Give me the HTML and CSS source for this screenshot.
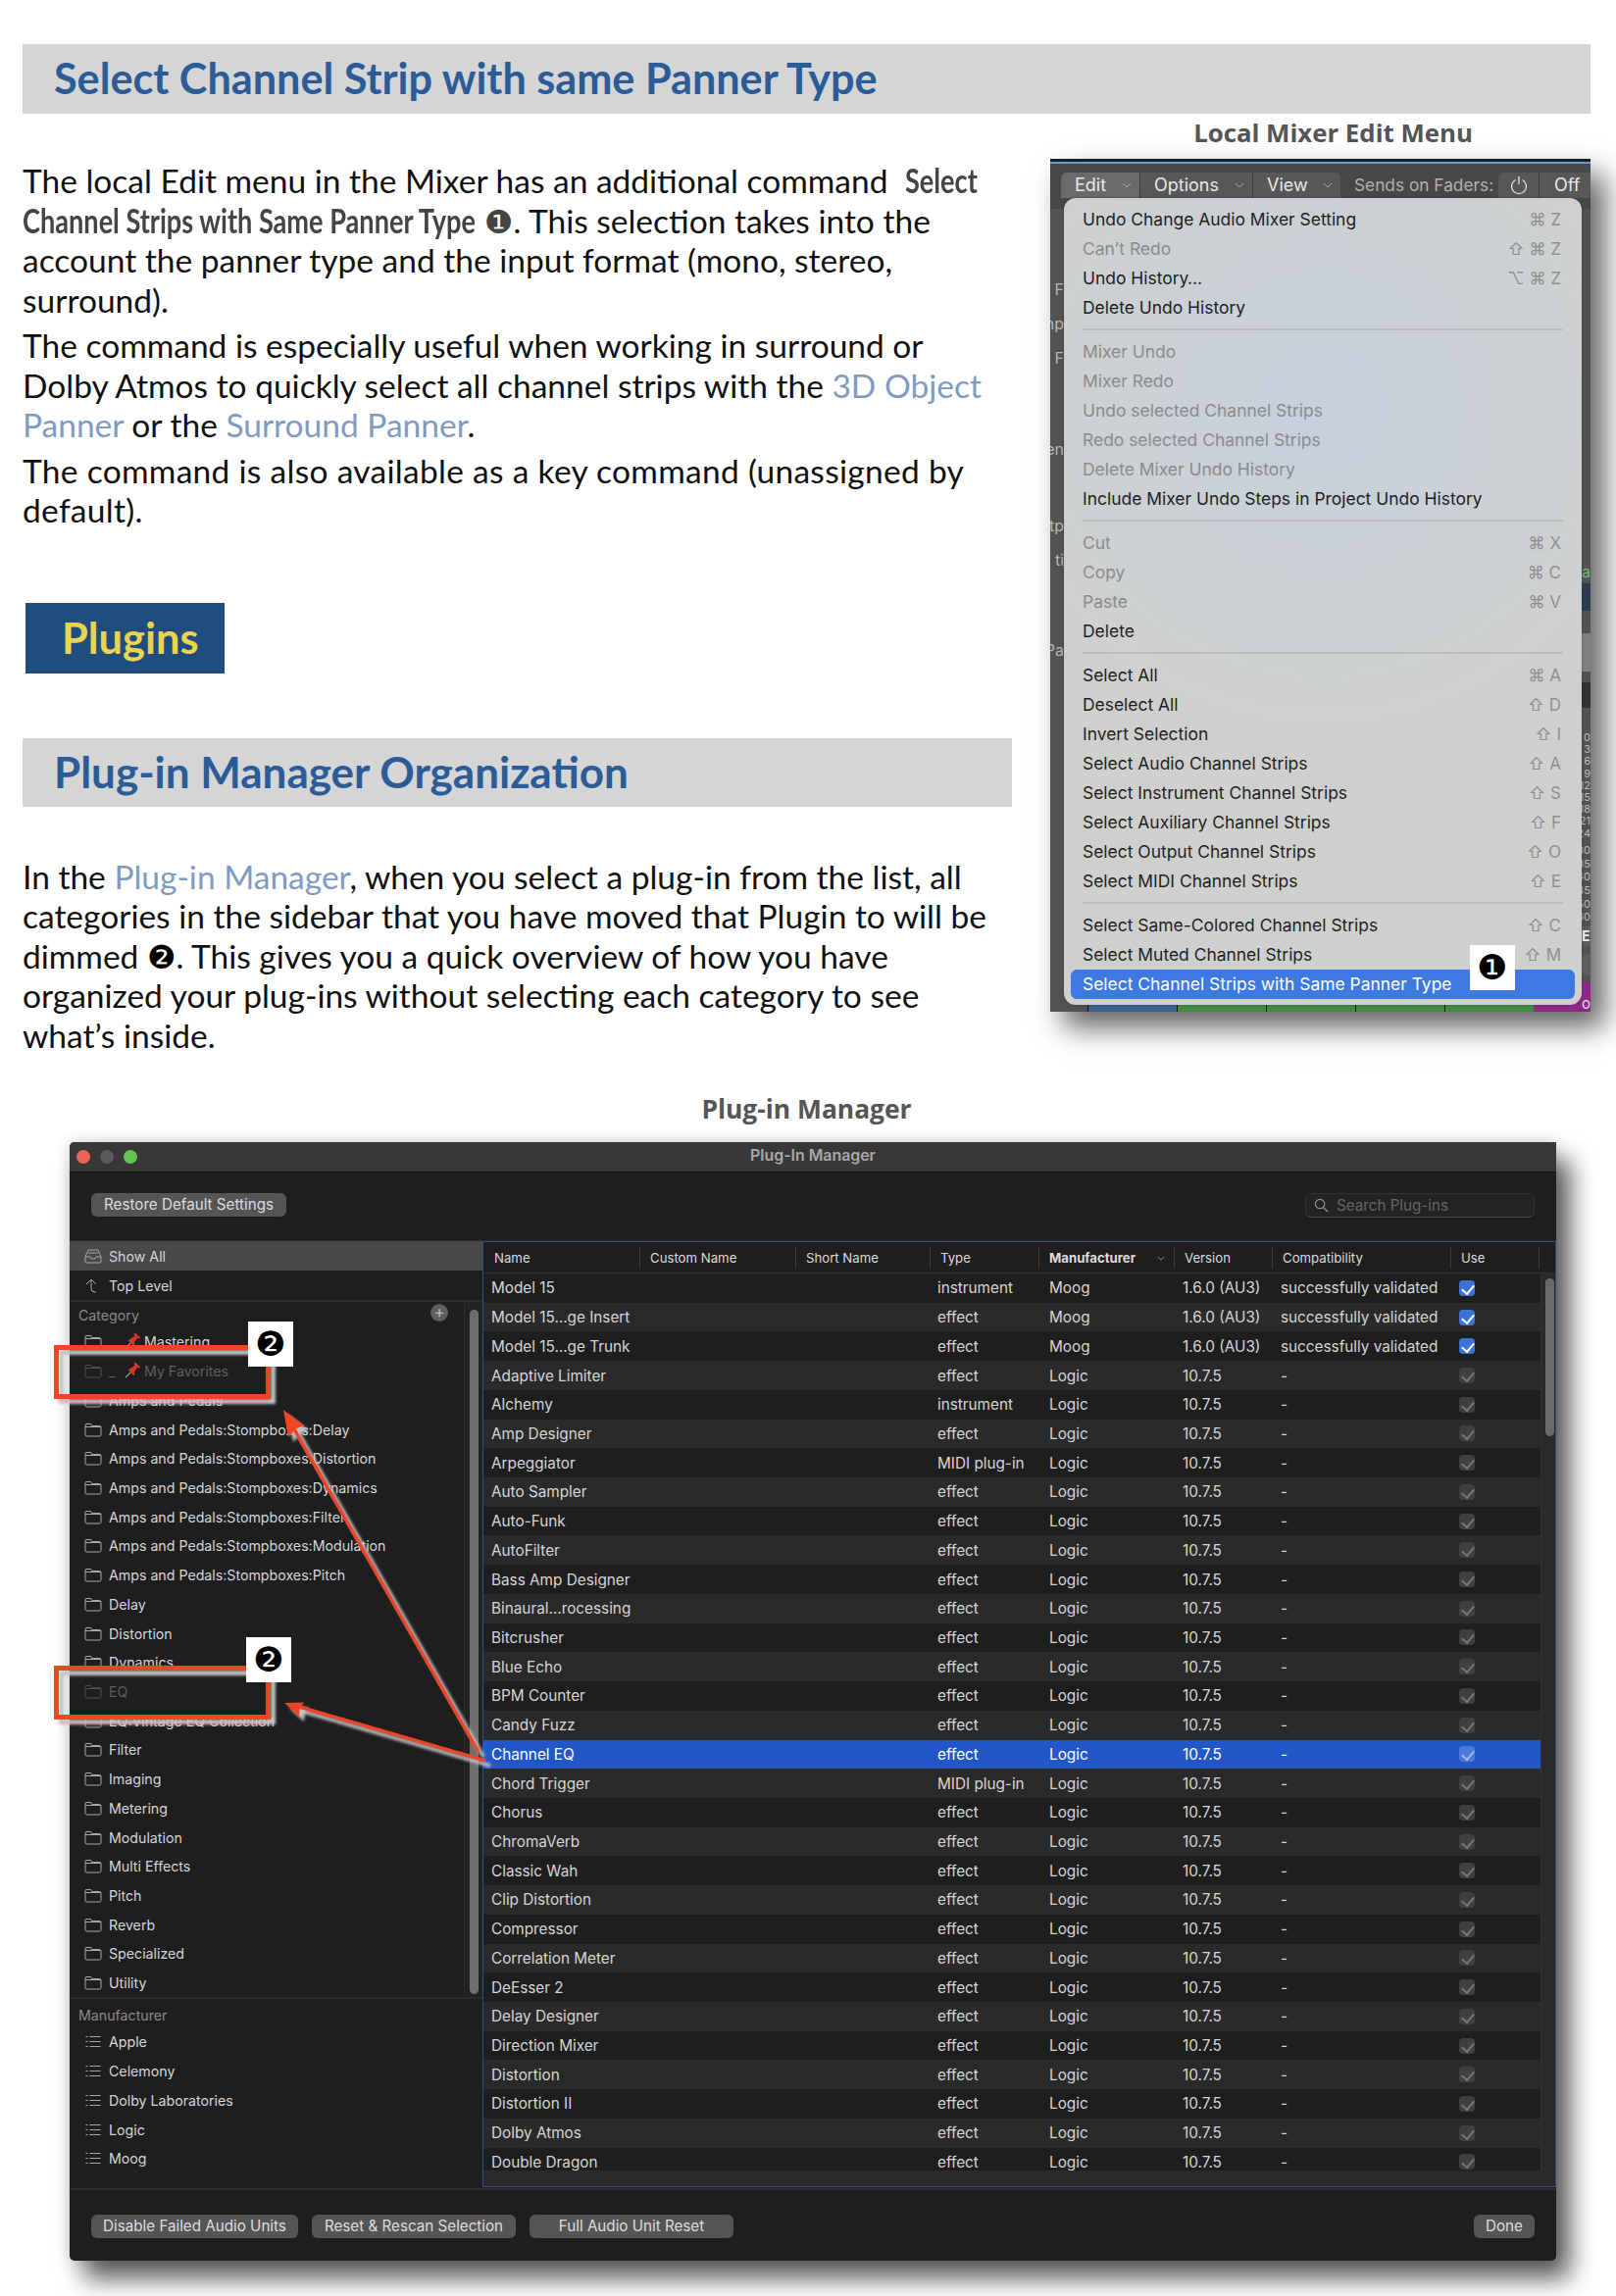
FILE: index.html
```html
<!DOCTYPE html>
<html lang="en">
<head>
<meta charset="utf-8">
<title>Select Channel Strip with same Panner Type</title>
<link rel="stylesheet" href="styles.css">
</head>
<body>
<svg class="defs" width="0" height="0">
  <symbol id="folder" viewBox="0 0 17 15"><path d="M.5 12.500v-10a1 1 0 0 1 1-1h4.600l1 2h7.900a1.500 1.500 0 0 1 1.500 1.500v7.500a1.500 1.500 0 0 1-1.500 1.500H2a1.500 1.500 0 0 1-1.500-1.500zM.5 4.500h16" fill="none" stroke="currentColor"/></symbol>
  <symbol id="list" viewBox="0 0 17 15"><path d="M5 2.500h11M5 7.500h11M5 12.500h11" stroke="currentColor" fill="none"/><path d="M1 2.500h2M1 7.500h2M1 12.500h2" stroke="currentColor" fill="none"/></symbol>
  <symbol id="pin" viewBox="0 0 18 18"><path d="M1 17l6-6" stroke="#aaa" stroke-width="1.200"/><path d="M6 7.500l5-3.500-1-2.500 1.500-1L17.500 6l-1.500 1-2-1-3.500 5 .5 3-1 1-6-6 1-1z" fill="#d9342b"/></symbol>
</svg>
<main class="page">
  <h1 class="band band-wide">Select Channel Strip with same Panner Type</h1>
  <div class="columns">
    <section class="col-left">
      <p class="copy first">The local Edit menu in the Mixer has an additional command&nbsp; <b class="term term-a">Select</b> <b class="term term-b">Channel Strips with Same Panner Type</b> <span class="num num-grey">❶</span>. This selection takes into the account the panner type and the input format (mono, stereo, surround).</p>
      <p class="copy">The command is especially useful when working in surround or Dolby Atmos to quickly select all channel strips with the <a class="lnk">3D Object Panner</a> or the <a class="lnk">Surround Panner</a>.</p>
      <p class="copy copy-3">The command is also available as a key command (unassigned by default).</p>
      <div class="chapter">Plugins</div>
      <h2 class="band band-2">Plug-in Manager Organization</h2>
      <p class="copy first2">In the <a class="lnk">Plug-in Manager</a>, when you select a plug-in from the list, all categories in the sidebar that you have moved that Plugin to will be dimmed <span class="num">❷</span>. This gives you a quick overview of how you have organized your plug-ins without selecting each category to see what’s inside.</p>
    </section>
    <aside class="col-right">
      <div class="caption cap-mixer">Local Mixer Edit Menu</div>
      <div class="mixer">
        <div class="mix-stripe"></div>
        <div class="mix-bar">
          <div class="seg">
            <span class="seg-btn seg-on seg-edit">Edit<svg class="chev" viewBox="0 0 10 6"><path d="M1 1l4 4 4-4" fill="none" stroke="currentColor"/></svg></span>
            <span class="seg-btn seg-opt">Options<svg class="chev" viewBox="0 0 10 6"><path d="M1 1l4 4 4-4" fill="none" stroke="currentColor"/></svg></span>
            <span class="seg-btn seg-view">View<svg class="chev" viewBox="0 0 10 6"><path d="M1 1l4 4 4-4" fill="none" stroke="currentColor"/></svg></span>
          </div>
          <span class="sends">Sends on Faders:</span>
          <span class="pwr"><svg viewBox="0 0 20 20" width="20" height="20"><path d="M6.500 4.500a7.500 7.500 0 1 0 7 0M10 1v8" fill="none" stroke="#e6e6e6" stroke-width="1.300"/></svg></span>
          <span class="off">Off</span>
        </div>
        <div class="mix-bg">
          <span class="sl sl-1">l F</span><span class="sl sl-2">np</span><span class="sl sl-3">o F</span><span class="sl sl-4">en</span><span class="sl sl-5">tp</span><span class="sl sl-6">ti</span><span class="sl sl-7">Pa</span>
          <span class="sr-ac">ac</span><span class="sr-meter"></span><span class="sr-knob"></span><span class="sr-dark"></span>
          <div class="sr-nums"><span>0</span><span>3</span><span>6</span><span>9</span><span>12</span><span>15</span><span>18</span><span>21</span><span>24</span><span class="gap">30</span><span class="wide">35</span><span class="wide">40</span><span class="wide">45</span><span class="wide">50</span><span class="wide">60</span></div>
          <span class="sr-e">E</span><span class="sr-btn"></span>
          <div class="strips"><span class="st st-none"></span><span class="st st-blue"></span><span class="st st-green"></span><span class="st st-green"></span><span class="st st-green"></span><span class="st st-green"></span><span class="st st-pink">o</span></div>
        </div>
        <div class="menu">
          <div class="mi">Undo Change Audio Mixer Setting<kbd>⌘ Z</kbd></div>
          <div class="mi dis">Can’t Redo<kbd>⇧ ⌘ Z</kbd></div>
          <div class="mi">Undo History…<kbd>⌥ ⌘ Z</kbd></div>
          <div class="mi">Delete Undo History</div>
          <hr class="ms">
          <div class="mi dis">Mixer Undo</div>
          <div class="mi dis">Mixer Redo</div>
          <div class="mi dis">Undo selected Channel Strips</div>
          <div class="mi dis">Redo selected Channel Strips</div>
          <div class="mi dis">Delete Mixer Undo History</div>
          <div class="mi">Include Mixer Undo Steps in Project Undo History</div>
          <hr class="ms">
          <div class="mi dis">Cut<kbd>⌘ X</kbd></div>
          <div class="mi dis">Copy<kbd>⌘ C</kbd></div>
          <div class="mi dis">Paste<kbd>⌘ V</kbd></div>
          <div class="mi">Delete</div>
          <hr class="ms">
          <div class="mi">Select All<kbd>⌘ A</kbd></div>
          <div class="mi">Deselect All<kbd>⇧ D</kbd></div>
          <div class="mi">Invert Selection<kbd>⇧ I</kbd></div>
          <div class="mi">Select Audio Channel Strips<kbd>⇧ A</kbd></div>
          <div class="mi">Select Instrument Channel Strips<kbd>⇧ S</kbd></div>
          <div class="mi">Select Auxiliary Channel Strips<kbd>⇧ F</kbd></div>
          <div class="mi">Select Output Channel Strips<kbd>⇧ O</kbd></div>
          <div class="mi">Select MIDI Channel Strips<kbd>⇧ E</kbd></div>
          <hr class="ms">
          <div class="mi">Select Same-Colored Channel Strips<kbd>⇧ C</kbd></div>
          <div class="mi">Select Muted Channel Strips<kbd>⇧ M</kbd></div>
          <div class="mi sel">Select Channel Strips with Same Panner Type</div>
        </div>
        <div class="badge badge-1">❶</div>
      </div>
    </aside>
  </div>
  <div class="caption cap-pm">Plug-in Manager</div>
  <div class="stage">
    <div class="win">
      <div class="titlebar">
        <span class="light red"></span><span class="light grey"></span><span class="light green"></span>
        <span class="wintitle">Plug-In Manager</span>
      </div>
      <div class="tools">
        <span class="btn btn-restore">Restore Default Settings</span>
        <span class="search"><svg viewBox="0 0 16 16" width="15" height="15"><circle cx="6.500" cy="6.500" r="5" fill="none" stroke="#999" stroke-width="1.200"/><path d="M10 10l5 5" stroke="#999" stroke-width="1.400"/></svg>Search Plug-ins</span>
      </div>
      <div class="body">
        <nav class="side">
          <div class="top-row on"><svg class="ic" viewBox="0 0 18 15"><path d="M1 8l3-7h10l3 7v5a1 1 0 0 1-1 1H2a1 1 0 0 1-1-1zM1 8h5l1 2h4l1-2h5M4 4h10" fill="none" stroke="currentColor"/></svg>Show All</div>
          <div class="top-row"><svg class="ic" viewBox="0 0 18 15"><path d="M2 6l5-5 5 5M7 1v9q0 4 4 4h1" fill="none" stroke="currentColor"/></svg>Top Level</div>
          <div class="cat">
            <div class="cat-list">
              <div class="head">Category<span class="plus">+</span></div>
              <div class="r"><svg class="ic"><use href="#folder"/></svg><svg class="pin"><use href="#pin"/></svg>Mastering</div>
              <div class="r dim"><svg class="ic"><use href="#folder"/></svg><span class="us">_</span><svg class="pin"><use href="#pin"/></svg>My Favorites</div>
              <div class="r"><svg class="ic"><use href="#folder"/></svg>Amps and Pedals</div>
              <div class="r"><svg class="ic"><use href="#folder"/></svg>Amps and Pedals:Stompboxes:Delay</div>
              <div class="r"><svg class="ic"><use href="#folder"/></svg>Amps and Pedals:Stompboxes:Distortion</div>
              <div class="r"><svg class="ic"><use href="#folder"/></svg>Amps and Pedals:Stompboxes:Dynamics</div>
              <div class="r"><svg class="ic"><use href="#folder"/></svg>Amps and Pedals:Stompboxes:Filter</div>
              <div class="r"><svg class="ic"><use href="#folder"/></svg>Amps and Pedals:Stompboxes:Modulation</div>
              <div class="r"><svg class="ic"><use href="#folder"/></svg>Amps and Pedals:Stompboxes:Pitch</div>
              <div class="r"><svg class="ic"><use href="#folder"/></svg>Delay</div>
              <div class="r"><svg class="ic"><use href="#folder"/></svg>Distortion</div>
              <div class="r"><svg class="ic"><use href="#folder"/></svg>Dynamics</div>
              <div class="r dim"><svg class="ic"><use href="#folder"/></svg>EQ</div>
              <div class="r"><svg class="ic"><use href="#folder"/></svg>EQ:Vintage EQ Collection</div>
              <div class="r"><svg class="ic"><use href="#folder"/></svg>Filter</div>
              <div class="r"><svg class="ic"><use href="#folder"/></svg>Imaging</div>
              <div class="r"><svg class="ic"><use href="#folder"/></svg>Metering</div>
              <div class="r"><svg class="ic"><use href="#folder"/></svg>Modulation</div>
              <div class="r"><svg class="ic"><use href="#folder"/></svg>Multi Effects</div>
              <div class="r"><svg class="ic"><use href="#folder"/></svg>Pitch</div>
              <div class="r"><svg class="ic"><use href="#folder"/></svg>Reverb</div>
              <div class="r"><svg class="ic"><use href="#folder"/></svg>Specialized</div>
              <div class="r"><svg class="ic"><use href="#folder"/></svg>Utility</div>
            </div>
            <div class="side-track"><span class="side-thumb"></span></div>
          </div>
          <div class="head head-m">Manufacturer</div>
          <div class="r"><svg class="ic"><use href="#list"/></svg>Apple</div>
          <div class="r"><svg class="ic"><use href="#list"/></svg>Celemony</div>
          <div class="r"><svg class="ic"><use href="#list"/></svg>Dolby Laboratories</div>
          <div class="r"><svg class="ic"><use href="#list"/></svg>Logic</div>
          <div class="r"><svg class="ic"><use href="#list"/></svg>Moog</div>
        </nav>
        <section class="table">
          <div class="thead">
            <span class="th th-name">Name</span><span class="th th-custom">Custom Name</span><span class="th th-short">Short Name</span><span class="th th-type">Type</span><span class="th th-mfr"><b>Manufacturer</b><svg class="chev chev-s" viewBox="0 0 10 6"><path d="M1 1l4 4 4-4" fill="none" stroke="currentColor"/></svg></span><span class="th th-ver">Version</span><span class="th th-comp">Compatibility</span><span class="th th-use">Use</span>
          </div>
          <div class="tmain">
            <div class="tbody">
              <div class="row"><span>Model 15</span><span>instrument</span><span>Moog</span><span>1.6.0 (AU3)</span><span>successfully validated</span><i class="cb on"></i></div>
              <div class="row"><span>Model 15…ge Insert</span><span>effect</span><span>Moog</span><span>1.6.0 (AU3)</span><span>successfully validated</span><i class="cb on"></i></div>
              <div class="row"><span>Model 15…ge Trunk</span><span>effect</span><span>Moog</span><span>1.6.0 (AU3)</span><span>successfully validated</span><i class="cb on"></i></div>
              <div class="row"><span>Adaptive Limiter</span><span>effect</span><span>Logic</span><span>10.7.5</span><span>-</span><i class="cb"></i></div>
              <div class="row"><span>Alchemy</span><span>instrument</span><span>Logic</span><span>10.7.5</span><span>-</span><i class="cb"></i></div>
              <div class="row"><span>Amp Designer</span><span>effect</span><span>Logic</span><span>10.7.5</span><span>-</span><i class="cb"></i></div>
              <div class="row"><span>Arpeggiator</span><span>MIDI plug-in</span><span>Logic</span><span>10.7.5</span><span>-</span><i class="cb"></i></div>
              <div class="row"><span>Auto Sampler</span><span>effect</span><span>Logic</span><span>10.7.5</span><span>-</span><i class="cb"></i></div>
              <div class="row"><span>Auto-Funk</span><span>effect</span><span>Logic</span><span>10.7.5</span><span>-</span><i class="cb"></i></div>
              <div class="row"><span>AutoFilter</span><span>effect</span><span>Logic</span><span>10.7.5</span><span>-</span><i class="cb"></i></div>
              <div class="row"><span>Bass Amp Designer</span><span>effect</span><span>Logic</span><span>10.7.5</span><span>-</span><i class="cb"></i></div>
              <div class="row"><span>Binaural…rocessing</span><span>effect</span><span>Logic</span><span>10.7.5</span><span>-</span><i class="cb"></i></div>
              <div class="row"><span>Bitcrusher</span><span>effect</span><span>Logic</span><span>10.7.5</span><span>-</span><i class="cb"></i></div>
              <div class="row"><span>Blue Echo</span><span>effect</span><span>Logic</span><span>10.7.5</span><span>-</span><i class="cb"></i></div>
              <div class="row"><span>BPM Counter</span><span>effect</span><span>Logic</span><span>10.7.5</span><span>-</span><i class="cb"></i></div>
              <div class="row"><span>Candy Fuzz</span><span>effect</span><span>Logic</span><span>10.7.5</span><span>-</span><i class="cb"></i></div>
              <div class="row sel-row"><span>Channel EQ</span><span>effect</span><span>Logic</span><span>10.7.5</span><span>-</span><i class="cb"></i></div>
              <div class="row"><span>Chord Trigger</span><span>MIDI plug-in</span><span>Logic</span><span>10.7.5</span><span>-</span><i class="cb"></i></div>
              <div class="row"><span>Chorus</span><span>effect</span><span>Logic</span><span>10.7.5</span><span>-</span><i class="cb"></i></div>
              <div class="row"><span>ChromaVerb</span><span>effect</span><span>Logic</span><span>10.7.5</span><span>-</span><i class="cb"></i></div>
              <div class="row"><span>Classic Wah</span><span>effect</span><span>Logic</span><span>10.7.5</span><span>-</span><i class="cb"></i></div>
              <div class="row"><span>Clip Distortion</span><span>effect</span><span>Logic</span><span>10.7.5</span><span>-</span><i class="cb"></i></div>
              <div class="row"><span>Compressor</span><span>effect</span><span>Logic</span><span>10.7.5</span><span>-</span><i class="cb"></i></div>
              <div class="row"><span>Correlation Meter</span><span>effect</span><span>Logic</span><span>10.7.5</span><span>-</span><i class="cb"></i></div>
              <div class="row"><span>DeEsser 2</span><span>effect</span><span>Logic</span><span>10.7.5</span><span>-</span><i class="cb"></i></div>
              <div class="row"><span>Delay Designer</span><span>effect</span><span>Logic</span><span>10.7.5</span><span>-</span><i class="cb"></i></div>
              <div class="row"><span>Direction Mixer</span><span>effect</span><span>Logic</span><span>10.7.5</span><span>-</span><i class="cb"></i></div>
              <div class="row"><span>Distortion</span><span>effect</span><span>Logic</span><span>10.7.5</span><span>-</span><i class="cb"></i></div>
              <div class="row"><span>Distortion II</span><span>effect</span><span>Logic</span><span>10.7.5</span><span>-</span><i class="cb"></i></div>
              <div class="row"><span>Dolby Atmos</span><span>effect</span><span>Logic</span><span>10.7.5</span><span>-</span><i class="cb"></i></div>
              <div class="row"><span>Double Dragon</span><span>effect</span><span>Logic</span><span>10.7.5</span><span>-</span><i class="cb"></i></div>
            </div>
            <div class="t-gutter"><span class="t-thumb"></span></div>
          </div>
        </section>
      </div>
      <div class="foot">
        <span class="btn btn-a">Disable Failed Audio Units</span>
        <span class="btn btn-b">Reset &amp; Rescan Selection</span>
        <span class="btn btn-b">Full Audio Unit Reset</span>
        <span class="btn btn-done">Done</span>
      </div>
    </div>
    <svg class="annot" viewBox="0 0 1516 1141" width="1516" height="1141">
      <defs>
        <filter id="halo" x="-20%" y="-20%" width="150%" height="150%"><feDropShadow dx="5" dy="5" stdDeviation="1.800" flood-color="#c4c4c4" flood-opacity="1"/></filter>
      </defs>
      <g filter="url(#halo)">
        <rect x="-13.500" y="209.500" width="216" height="50" fill="none" stroke="#ee4527" stroke-width="5"/>
      </g>
      <g filter="url(#halo)">
        <rect x="-13.500" y="536.500" width="216" height="50" fill="none" stroke="#ee4527" stroke-width="5"/>
      </g>
      <g filter="url(#halo)" fill="#ee4527" stroke="none">
        <path d="M417 622L228 291" stroke="#ee4527" stroke-width="3.600"/>
        <path d="M218 273l21 16-9 4-7 8z"/>
      </g>
      <g filter="url(#halo)" fill="#ee4527" stroke="none">
        <path d="M424 631L234 576" stroke="#ee4527" stroke-width="3.600"/>
        <path d="M219 572l20-.5-4 6-1 8.500z"/>
      </g>
    </svg>
    <div class="badge badge-2a">❷</div>
    <div class="badge badge-2b">❷</div>
  </div>
</main>
</body>
</html>
```
FILE: styles.css
```css
* { box-sizing: border-box; }
html, body { margin: 0; padding: 0; background: #fff; }
body { font-family: Lato, "Noto Sans", sans-serif; }
.defs { position: absolute; }
.page { width: 1648px; height: 2342px; padding: 45px 26px 0 23px; overflow: hidden; }

.band { margin: 0; background: #d5d5d5; color: #2b5c97; font-family: Lato, sans-serif; font-weight: 700; font-size: 43.200px; height: 71px; line-height: 68px; padding-left: 32px; }
.columns { display: grid; grid-template-columns: 1009px 551px; column-gap: 39px; }

.col-left { padding-top: 48px; }
.copy { margin: 0 0 6px; font-size: 33.500px; line-height: 40.500px; color: #111; width: 1005px; }
.copy-3 { letter-spacing: .3px; }
.first2 { margin-top: 51px; }
.term { display: inline-block; font-weight: 700; color: #444; white-space: nowrap; transform: scaleX(.81); transform-origin: 0 50%; }
.term-a { margin-right: -17px; }
.term-b { margin-right: -108px; }
.num { font-family: "DejaVu Sans", sans-serif; font-size: 33px; line-height: 0; color: #000; }
.num-grey { color: #444; }
.lnk { color: #7f9bc1; }
.chapter { width: 203px; height: 72px; margin: 74px 0 0 3px; background: #1e4d7e; color: #e8d44f; font-size: 43.400px; font-weight: 700; line-height: 70px; padding-left: 37px; }
.band-2 { height: 70px; margin-top: 66px; font-size: 44px; }

.caption { font-family: "Open Sans", sans-serif; font-weight: 700; font-size: 26.400px; color: #555; line-height: 38px; text-align: center; height: 38px; }
.cap-mixer { padding-left: 26px; margin-bottom: 8px; font-size: 25.800px; }
.cap-pm { margin-top: 30px; width: 1599px; }

.mixer { position: relative; height: 870px; background: #525252; font-family: Inter, "DejaVu Sans", sans-serif; box-shadow: 14px 16px 28px rgba(0,0,0,.62); overflow: visible; }
.mix-stripe { height: 5px; background: #16202c; border-bottom: 2px solid #6f9bcb; }
.mix-bar { display: flex; align-items: flex-start; height: 46px; background: #474747; padding: 9px 0 0 11px; font-size: 18px; color: #e8e8e8; overflow: hidden; }
.seg { display: flex; height: 26px; border-radius: 6px 6px 0 0; overflow: hidden; }
.seg-btn { display: flex; align-items: center; justify-content: space-between; background: #585858; border-right: 1px solid #3c3c3c; padding: 0 8px 0 14px; line-height: 26px; }
.seg-on { background: #6a6a6a; }
.seg-edit { width: 81px; }
.seg-opt { width: 115px; }
.seg-view { width: 89px; border-right: 0; }
.chev { width: 10px; height: 6px; color: #aaa; }
.sends { margin-left: 14px; width: 147px; font-size: 17.300px; line-height: 26px; color: #b2b2b2; white-space: nowrap; }
.pwr { width: 42px; height: 26px; background: #585858; border-right: 1px solid #3c3c3c; border-radius: 6px 0 0 0; display: flex; align-items: center; justify-content: center; }
.off { width: 52px; height: 26px; padding-left: 15px; line-height: 26px; background: #585858; }

.mix-bg { position: absolute; inset: 0; overflow: hidden; pointer-events: none; }
.sl { position: absolute; left: 0; font-size: 16px; color: #b8b8b8; width: 14px; overflow: hidden; white-space: nowrap; line-height: 18px; direction: rtl; }
.sl-1 { top: 124px; }
.sl-2 { top: 159px; }
.sl-3 { top: 194px; }
.sl-4 { top: 287px; }
.sl-5 { top: 365px; }
.sl-6 { top: 400px; }
.sl-7 { top: 492px; }
.sr-ac { position: absolute; left: 542px; top: 412px; width: 9px; overflow: hidden; color: #6ec06a; font-size: 16px; line-height: 18px; }
.sr-meter { position: absolute; right: 0; top: 433px; width: 9px; height: 28px; background: #2a3b52; }
.sr-knob { position: absolute; right: 0; top: 484px; width: 9px; height: 39px; background: #808080; }
.sr-dark { position: absolute; right: 0; top: 534px; width: 9px; height: 26px; background: #333; }
.sr-nums { position: absolute; right: 0; top: 584px; width: 9px; display: flex; flex-direction: column; font-size: 11px; line-height: 12.200px; color: #bbb; overflow: hidden; white-space: nowrap; direction: rtl; }
.sr-nums .gap { margin-top: 5px; height: 13.700px; }
.sr-nums .wide { height: 13.700px; }
.sr-e { position: absolute; right: 0; top: 783px; width: 9px; height: 20px; background: #5e5e5e; color: #eee; font-size: 14px; line-height: 20px; font-weight: 700; }
.sr-btn { position: absolute; right: 0; top: 811px; width: 9px; height: 22px; background: #5e5e5e; }
.strips { position: absolute; left: 0; right: 0; bottom: 0; height: 30px; display: flex; }
.st { width: 91px; border-left: 1px solid #111; }
.st-none { width: 38px; border: 0; }
.st-blue { background: #3a6192; }
.st-green { background: #3f8c3c; }
.st-pink { flex: 1; background: #8e2a86; color: #ddd; font-size: 15px; text-align: right; line-height: 44px; border-left: 0; }

.menu { position: absolute; left: 14px; top: 40px; width: 528px; height: 823px; padding: 7px 0 0; border-radius: 12px; background: radial-gradient(ellipse 340px 330px at 50% 26%, #c6d0dd, #cfd0ce 100%); font-size: 17.450px; color: #1e1e1e; box-shadow: 0 0 3px rgba(0,0,0,.3); }
.mi { height: 30px; line-height: 30px; padding: 0 21px 0 19px; display: flex; justify-content: space-between; white-space: nowrap; }
.mi kbd { font-family: Inter, "DejaVu Sans", sans-serif; font-size: 17px; color: #8f8f8f; }
.dis { color: #8b8b8b; }
.ms { height: 2px; margin: 6px 19px 7px; border: 0; background: #bdbdbd; }
.sel { margin: 0 7px; padding-left: 12px; color: #fff; background: #3d79e0; border-radius: 6px; }

.badge { position: absolute; width: 46px; height: 46px; background: #fff; color: #000; font-family: "DejaVu Sans", sans-serif; font-size: 35px; line-height: 46px; text-align: center; }
.badge-1 { left: 428px; top: 802px; }

.stage { position: relative; margin: 15px 0 0 48px; width: 1516px; height: 1141px; }
.annot { position: absolute; left: 0; top: 0; overflow: visible; }
.badge-2a { left: 182px; top: 183px; }
.badge-2b { left: 180px; top: 505px; }

.win { display: flex; flex-direction: column; height: 1141px; background: #1e1e1e; color: #d6d6d6; font-family: Inter, "DejaVu Sans", sans-serif; font-size: 14.200px; box-shadow: 14px 18px 26px rgba(0,0,0,.66), -2px -2px 14px rgba(0,0,0,.12); border-radius: 5px 0 5px 5px; }
.titlebar { position: relative; display: flex; align-items: center; gap: 10px; flex: none; height: 31px; padding-left: 7px; background: #383838; border-bottom: 1px solid #141414; border-radius: 5px 0 0 0; }
.light { width: 14px; height: 14px; border-radius: 50%; }
.red { background: #ec6559; }
.grey { background: #5a5a5a; }
.green { background: #5fc454; }
.wintitle { position: absolute; left: 0; right: 0; top: 0; line-height: 28px; text-align: center; color: #a8a8a8; font-weight: 600; font-size: 15.900px; }
.tools { display: flex; justify-content: space-between; align-items: flex-start; flex: none; height: 70px; padding: 21px 22px 0; border-bottom: 1px solid #2c2c2c; font-size: 15.200px; }
.btn { display: block; height: 24px; line-height: 24px; border-radius: 6px; background: #555; color: #ddd; text-align: center; white-space: nowrap; }
.btn-restore { width: 199px; }
.search { display: flex; align-items: center; gap: 8px; width: 234px; height: 25px; padding-left: 8px; background: #232323; border: 1px solid #333; border-bottom-color: #454545; border-radius: 6px; color: #666; }

.body { display: flex; flex: none; height: 966px; }
.side { width: 421px; flex: none; }
.top-row { display: flex; align-items: center; height: 30px; padding-left: 15px; }
.top-row.on { background: #484848; }
.top-row + .cat { border-top: 2px solid #2c2c2c; }
.ic { flex: none; width: 18px; height: 15px; margin-right: 7px; color: #a8a8a8; }
.cat { display: flex; height: 713px; border-bottom: 2px solid #2c2c2c; }
.cat-list { width: 402px; flex: none; }
.head { display: flex; justify-content: space-between; align-items: center; height: 26px; padding: 0 16px 0 9px; color: #8b8b8b; }
.head-m { height: 29px; padding-top: 4px; }
.plus { width: 18px; height: 18px; margin-top: -4px; border-radius: 50%; background: #5e5e5e; color: #bbb; font-size: 17px; line-height: 17px; text-align: center; }
.r { display: flex; align-items: center; height: 29.720px; padding-left: 15px; white-space: nowrap; }
.dim { color: #5e5e5e; }
.dim .ic { color: #505050; }
.us { position: absolute; margin-left: 25px; }
.pin { width: 17px; height: 17px; margin: -3px 3px 0 16px; flex: none; }
.side-track { flex: 1; padding: 8px 4px 0 5px; background: #222; border-left: 1px solid #2c2c2c; }
.side-thumb { display: block; width: 9px; height: 698px; border-radius: 5px; background: #6e6e6e; }

.table { flex: 1; display: flex; flex-direction: column; margin-bottom: 1px; border: 1px solid #2d4d8f; border-right-width: 1px; background: #2a2a2a; }
.thead { display: flex; flex: none; height: 32px; background: #1e1e1e; border-bottom: 1px solid #333; font-size: 13.200px; color: #dcdcdc; }
.th { flex: none; height: 22px; margin-top: 5px; padding-left: 10px; line-height: 22px; border-right: 1px solid #3a3a3a; }
.th-name { width: 160px; padding-left: 11px; }
.th-custom { width: 159px; }
.th-short { width: 137px; }
.th-type { width: 111px; }
.th-mfr { width: 138px; display: flex; justify-content: space-between; align-items: center; padding-right: 9px; }
.th-mfr b { font-weight: 700; }
.chev-s { width: 8px; height: 5px; }
.th-ver { width: 100px; }
.th-comp { width: 182px; }
.th-use { width: 90px; }
.tmain { display: flex; height: 915px; }
.tbody { width: 1078px; height: 915px; overflow: hidden; flex: none; font-size: 15.300px; }
.row { display: grid; grid-template-columns: 455px 114px 136px 100px 182px 16px; align-items: center; height: 29.720px; padding-left: 8px; background: #2a2a2a; white-space: nowrap; }
.row:nth-child(odd) { background: #1e1e1e; }
.row.sel-row { background: #2257c9; color: #fff; }
.cb { position: relative; display: block; width: 16px; height: 16px; border-radius: 4px; background: #3f3f3f; }
.cb::after { content: ""; position: absolute; left: 5px; top: 2px; width: 6px; height: 10px; border: solid #777; border-width: 0 2px 2px 0; transform: rotate(40deg); }
.cb.on { background: #3a72d8; }
.cb.on::after { border-color: #fff; }
.sel-row .cb { background: #4a77d8; }
.sel-row .cb::after { border-color: #9db9ee; }
.t-gutter { flex: 1; padding: 5px 0 0 4px; border-left: 1px solid #333; }
.t-thumb { display: block; width: 9px; height: 161px; border-radius: 5px; background: #6a6a6a; }

.foot { display: flex; gap: 14px; flex: none; padding: 25px 22px 0; border-top: 2px solid #2c2c2c; font-size: 15.200px; }
.btn-a { width: 211px; }
.btn-b { width: 208px; }
.btn-done { width: 62px; margin-left: auto; }
```
